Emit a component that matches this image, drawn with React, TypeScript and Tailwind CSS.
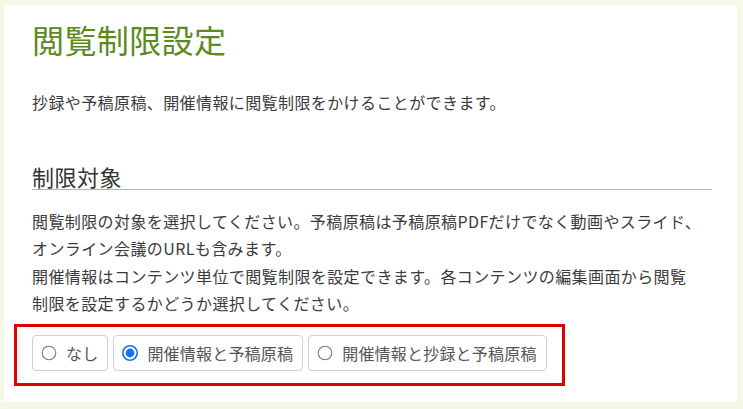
import React from "react";

const font = { fontFamily: '"Noto Sans CJK JP", "Noto Sans", sans-serif' };

function Radio({ checked }: { checked: boolean }) {
  return checked ? (
    <svg width="16" height="16" viewBox="0 0 16 16" className="shrink-0">
      <circle cx="8" cy="8" r="7.2" fill="#fff" stroke="#1a73e8" strokeWidth="1.6" />
      <circle cx="8" cy="8" r="4.4" fill="#1a73e8" />
    </svg>
  ) : (
    <svg width="16" height="16" viewBox="0 0 16 16" className="shrink-0">
      <circle cx="8" cy="8" r="6.8" fill="#fff" stroke="#767676" strokeWidth="1.1" />
    </svg>
  );
}

function Option({ label, checked }: { label: string; checked?: boolean }) {
  return (
    <label className="flex items-center h-[36px] pl-[8px] pr-[9px] gap-[9px] border border-[#cfcfcf] rounded-[4px] bg-white text-[16px] tracking-[0.2px] text-[#555] leading-none">
      <Radio checked={!!checked} />
      <span>{label}</span>
    </label>
  );
}

export default function App() {
  return (
    <div className="min-h-[409px] bg-[#f4f8e6] pt-[5px] pl-[4px] pr-[6px] pb-[7px]" style={font}>
      <div className="bg-white h-[397px] pl-[28px] pr-[25px] pt-[14px]">
        <h1 className="text-[32px] leading-[40px] tracking-[0.4px] text-[#5c8a1e] font-normal">
          閲覧制限設定
        </h1>
        <p className="mt-[30px] text-[16px] leading-[27px] tracking-[0.4px] text-[#3b3b3b]">
          抄録や予稿原稿、開催情報に閲覧制限をかけることができます。
        </p>
        <h2 className="mt-[48px] text-[22px] leading-[25px] tracking-[0.5px] text-[#333] font-normal border-b border-[#b5b5b5]">
          制限対象
        </h2>
        <p className="mt-[18px] text-[16px] leading-[27.3px] tracking-[0.4px] text-[#3b3b3b]">
          閲覧制限の対象を選択してください。予稿原稿は予稿原稿PDFだけでなく動画やスライド、
          <br />
          オンライン会議のURLも含みます。
          <br />
          開催情報はコンテンツ単位で閲覧制限を設定できます。各コンテンツの編集画面から閲覧
          <br />
          制限を設定するかどうか選択してください。
        </p>
        <div className="mt-[7px] -ml-[18px] w-fit border-[3px] border-[#e00000] px-[15px] pt-[8px] pb-[12px]">
          <div className="flex gap-[5px]">
            <Option label="なし" />
            <Option label="開催情報と予稿原稿" checked />
            <Option label="開催情報と抄録と予稿原稿" />
          </div>
        </div>
      </div>
    </div>
  );
}
